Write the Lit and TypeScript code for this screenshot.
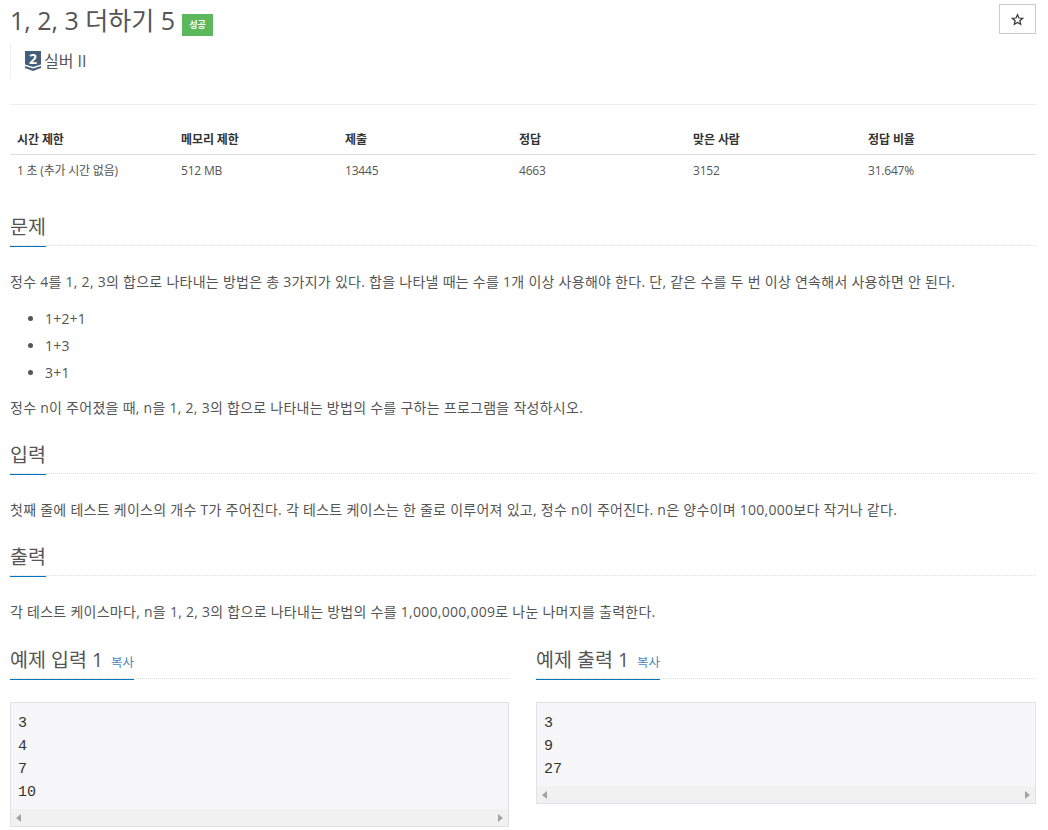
import { LitElement, html, css } from "lit";
import { customElement } from "lit/decorators.js";

const scroll = html`<div class="sb"><svg width="6" height="8" viewBox="0 0 6 8"><path d="M5 0V8L0 4Z" fill="#a3a3a3"/></svg><svg width="6" height="8" viewBox="0 0 6 8"><path d="M1 0V8L6 4Z" fill="#a3a3a3"/></svg></div>`;

@customElement("app-root")
export class AppRoot extends LitElement {
  static styles = css`
    :host { display: block; box-sizing: border-box; width: 1048px; height: 830px; overflow: hidden; padding: 0 12px 0 10px; background: #fff; color: #555; font: 14px/20px "Open Sans", "Noto Sans CJK KR", sans-serif; }
    * { box-sizing: border-box; }
    .top { display: flex; justify-content: space-between; align-items: flex-start; height: 105px; border-bottom: 1px solid #eee; }
    h1 { margin: 0; padding-top: 2px; font-size: 25px; line-height: 36px; font-weight: 400; color: #555; display: flex; align-items: center; }
    .badge { margin: 9px 0 0 7px; width: 31px; height: 22px; background: #5cb85c; color: #fff; font-size: 9px; font-weight: 700; line-height: 22px; text-align: center; }
    .tier { margin-top: 6px; height: 34px; border-left: 1px solid #eee; padding-left: 14px; display: flex; align-items: center; gap: 3px; font-size: 16px; color: #555; }
    .tier svg { overflow: visible; }
    .star { margin-top: 4px; width: 37px; height: 30px; border: 1px solid #ccc; display: flex; align-items: center; justify-content: center; }
    table { margin-top: 20px; width: 100%; border-collapse: collapse; table-layout: fixed; font-size: 12px; }
    th { height: 29px; padding: 2px 7px 0; text-align: left; font-weight: 700; color: #333; border-bottom: 1px solid #ddd; letter-spacing: -.1px; }
    td { height: 32px; padding: 2px 7px 0; color: #555; letter-spacing: -.2px; }
    .h { height: 31px; border-bottom: 1px dotted #e0e0e0; }
    .h span { display: inline-block; height: 32px; border-bottom: 1px solid #0076c0; font-size: 19.5px; line-height: 24px; color: #555; }
    .h small { font-size: 12.5px; color: #4a86c0; margin-left: 3px; }
    .problem { margin-top: 29px; }
    .next { margin-top: 25px; }
    p { margin: 0; letter-spacing: .27px; }
    .sec-body { margin-top: 26px; }
    ul { margin: 13px 0 12px; padding: 0 0 0 35px; }
    li { height: 27px; line-height: 27px; letter-spacing: .2px; }
    .ex { display: grid; grid-template-columns: 499px 500px; column-gap: 27px; margin-top: 26px; }
    .box { margin-top: 23px; border: 1px solid #e1e1e8; background: #f7f7f9; }
    pre { margin: 0; padding: 9px 7px 5px; font: 15px/23px "Liberation Mono", monospace; color: #333; }
    .sb { height: 17px; background: #f1f1f1; display: flex; justify-content: space-between; align-items: center; padding: 0 5px; }
  `;

  render() {
    return html`
      <div class="top">
        <div>
          <h1>1, 2, 3 더하기 5<span class="badge">성공</span></h1>
          <div class="tier">
            <svg width="16" height="20" viewBox="0 0 16 20"><path d="M0 0H16V13.500L8 16L0 13.500Z" fill="#435f7a"/><path d="M0 15L8 17.500L16 15V17L8 20L0 17Z" fill="#435f7a"/><text x="8" y="12.500" text-anchor="middle" font-size="14" font-weight="700" fill="#fff" font-family="Open Sans">2</text></svg>
            <span>실버 II</span>
          </div>
        </div>
        <div class="star"><svg width="13" height="13" viewBox="0 0 24 24"><path d="M12 3l2.7 6.2 6.8.6-5.1 4.5 1.5 6.6L12 17.4 6.1 20.9l1.5-6.6L2.500 9.800l6.800-.6Z" fill="none" stroke="#333" stroke-width="2.200"/></svg></div>
      </div>
      <table>
        <colgroup><col style="width:164px"><col style="width:164px"><col style="width:174px"><col style="width:174px"><col style="width:175px"><col></colgroup>
        <thead><tr><th>시간 제한</th><th>메모리 제한</th><th>제출</th><th>정답</th><th>맞은 사람</th><th>정답 비율</th></tr></thead>
        <tbody><tr><td>1 초 (추가 시간 없음)</td><td>512 MB</td><td>13445</td><td>4663</td><td>3152</td><td>31.647%</td></tr></tbody>
      </table>
      <div class="h problem"><span>문제</span></div>
      <div class="sec-body">
        <p>정수 4를 1, 2, 3의 합으로 나타내는 방법은 총 3가지가 있다. 합을 나타낼 때는 수를 1개 이상 사용해야 한다. 단, 같은 수를 두 번 이상 연속해서 사용하면 안 된다.</p>
        <ul><li>1+2+1</li><li>1+3</li><li>3+1</li></ul>
        <p>정수 n이 주어졌을 때, n을 1, 2, 3의 합으로 나타내는 방법의 수를 구하는 프로그램을 작성하시오.</p>
      </div>
      <div class="h next"><span>입력</span></div>
      <div class="sec-body"><p>첫째 줄에 테스트 케이스의 개수 T가 주어진다. 각 테스트 케이스는 한 줄로 이루어져 있고, 정수 n이 주어진다. n은 양수이며 100,000보다 작거나 같다.</p></div>
      <div class="h next"><span>출력</span></div>
      <div class="sec-body"><p>각 테스트 케이스마다, n을 1, 2, 3의 합으로 나타내는 방법의 수를 1,000,000,009로 나눈 나머지를 출력한다.</p></div>
      <div class="ex">
        <div><div class="h"><span>예제 입력 1 <small>복사</small></span></div><div class="box"><pre>3
4
7
10</pre>${scroll}</div></div>
        <div><div class="h"><span>예제 출력 1 <small>복사</small></span></div><div class="box"><pre>3
9
27</pre>${scroll}</div></div>
      </div>
    `;
  }
}
